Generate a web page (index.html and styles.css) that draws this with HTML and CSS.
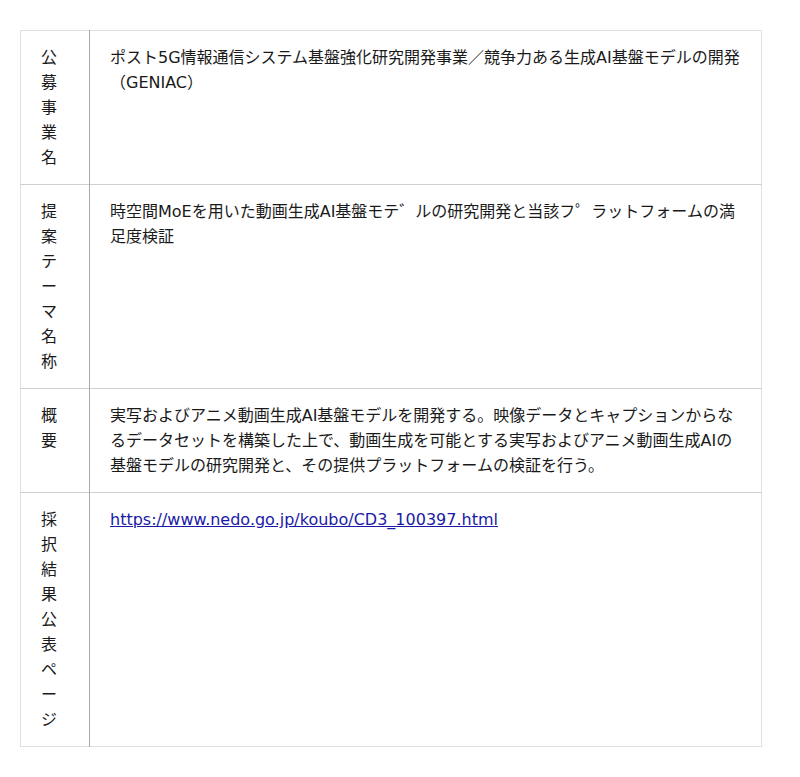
FILE: index.html
```html
<!DOCTYPE html>
<html lang="ja">
<head>
    <meta charset="UTF-8">
    <meta name="viewport" content="width=device-width, initial-scale=1.0">
    <title>採択事業</title>
    <link rel="stylesheet" href="styles.css">
</head>
<body>
    <div class="container">
        <table class="info-table">
            <tr>
                <th>公募事業名</th>
                <td>ポスト5G情報通信システム基盤強化研究開発事業／競争力ある生成AI基盤モデルの開発（GENIAC）</td>
            </tr>
            <tr>
                <th>提案テーマ名称</th>
                <td>時空間MoEを用いた動画生成AI基盤モテ゛ルの研究開発と当該フ゜ラットフォームの満足度検証</td>
            </tr>
            <tr>
                <th>概要</th>
                <td>実写およびアニメ動画生成AI基盤モデルを開発する。映像データとキャプションからなるデータセットを構築した上で、動画生成を可能とする実写およびアニメ動画生成AIの基盤モデルの研究開発と、その提供プラットフォームの検証を行う。</td>
            </tr>
            <tr>
                <th>採択結果公表ページ</th>
                <td><a href="https://www.nedo.go.jp/koubo/CD3_100397.html" class="link">https://www.nedo.go.jp/koubo/CD3_100397.html</a></td>
            </tr>
        </table>
    </div>
</body>
</html>
```

FILE: styles.css
```css
* {
    box-sizing: border-box;
    margin: 0;
    padding: 0;
}
body {
    font-family: 'DejaVu Sans', 'Noto Sans CJK JP', sans-serif;
    background-color: #fff;
    color: #1a1a1a;
    padding: 30px 20px;
}
.container {
    width: 742px;
}
.info-table {
    width: 100%;
    border-collapse: collapse;
    border: 1px solid #e0e0e0;
    font-size: 16px;
    line-height: 25px;
}
.info-table tr + tr {
    border-top: 1px solid #cfcfcf;
}
.info-table th {
    width: 69px;
    padding: 14px 20px;
    border-right: 1px solid #a8a8a8;
    font-weight: 400;
    text-align: left;
    vertical-align: top;
    line-break: anywhere;
}
.info-table td {
    padding: 14px 20px;
    vertical-align: top;
}
.link {
    color: #1a1aa6;
}
```
